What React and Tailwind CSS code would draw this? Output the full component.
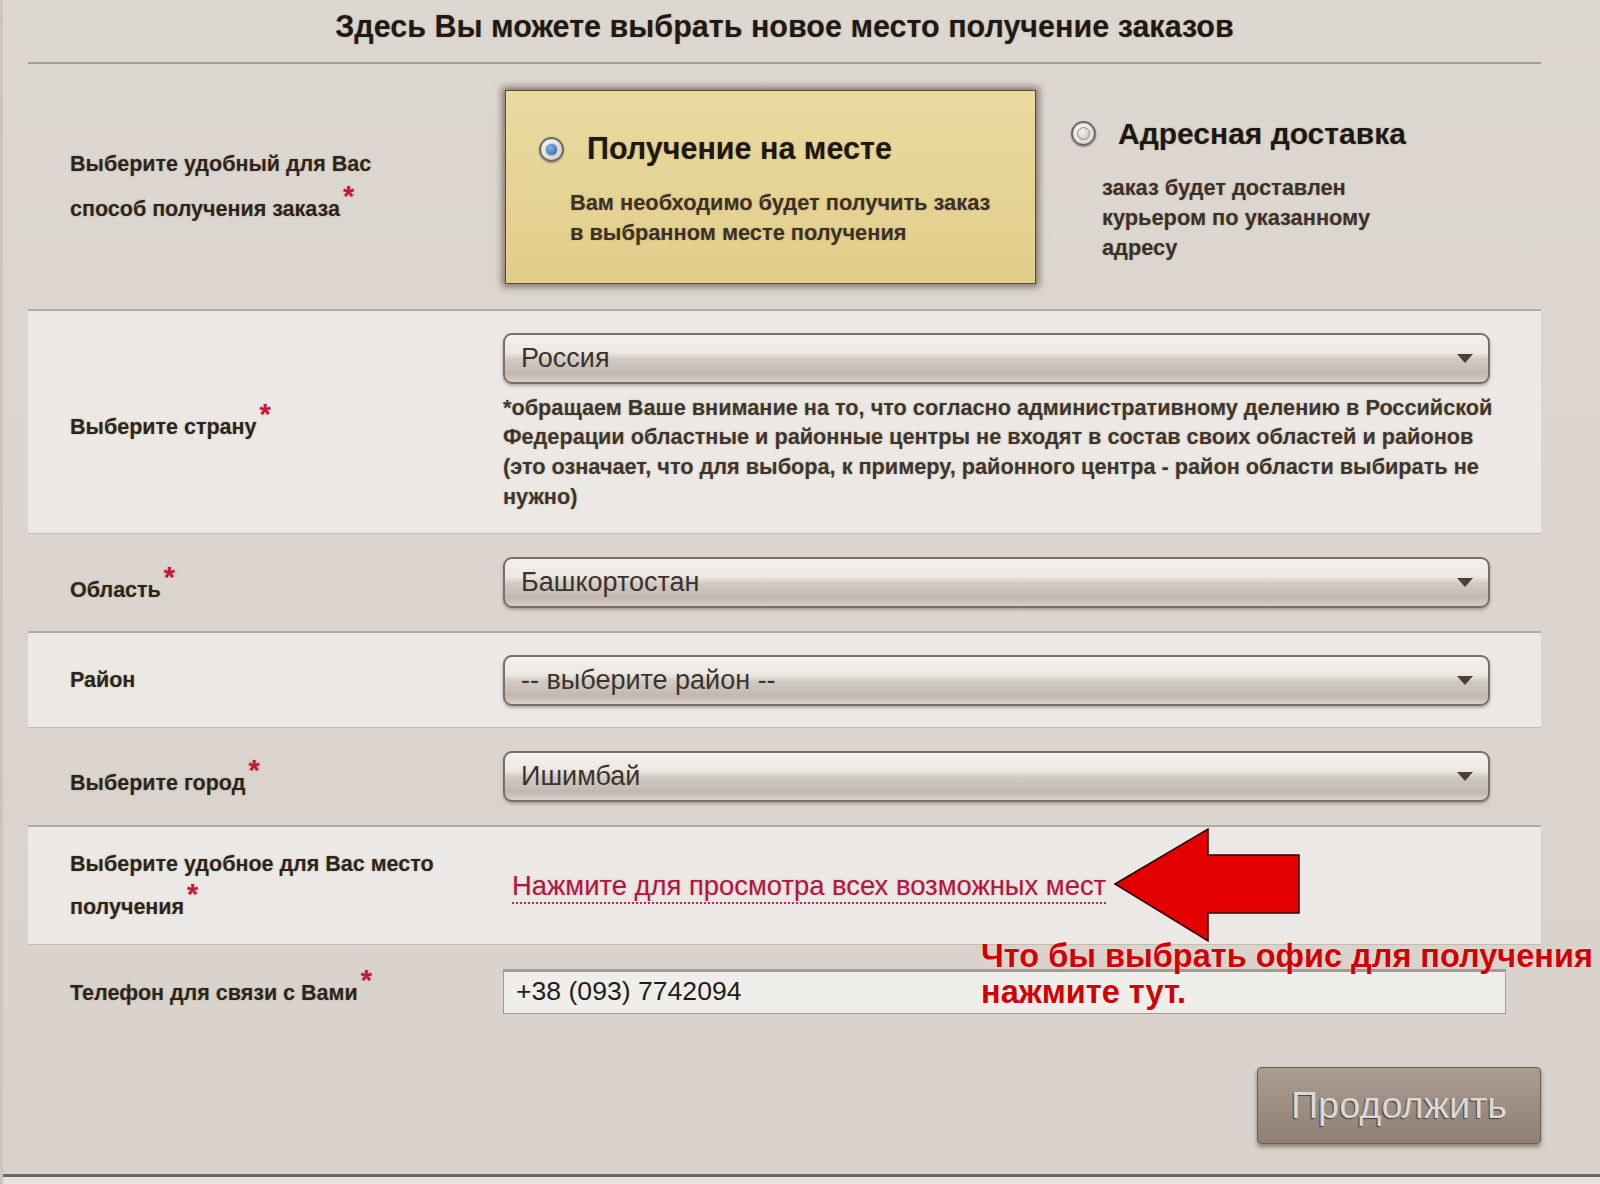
const labelShadow = "[text-shadow:0_0_2px_rgba(150,110,40,0.45)]";

function Star() {
  return (
    <span className="relative -top-[10px] ml-[3px] text-[29px] font-bold leading-none text-[#c8153e]">*</span>
  );
}

function Radio({ checked }) {
  return (
    <span className="flex h-[25px] w-[25px] shrink-0 items-center justify-center rounded-full border-2 border-[#6f6964] bg-[radial-gradient(circle_at_40%_35%,#ffffff,#c9c4c0)] shadow-[0_1px_2px_rgba(0,0,0,0.35)]">
      {checked ? (
        <span className="h-[11px] w-[11px] rounded-full bg-[radial-gradient(circle_at_35%_35%,#7fb6ee,#1f5fa8)] shadow-[0_0_2px_rgba(0,0,40,0.7)]" />
      ) : (
        <span className="h-[13px] w-[13px] rounded-full border border-[#8f8984] bg-[radial-gradient(circle_at_40%_35%,#f4f2f0,#c4beb9)]" />
      )}
    </span>
  );
}

function Select({ value }) {
  return (
    <div className="flex h-[51px] w-[987px] items-center justify-between rounded-[9px] border-2 border-[#7b6e66] bg-[linear-gradient(to_bottom,#f3f0ed_0%,#ebe7e3_38%,#d2c9c2_52%,#c2b8b0_82%,#d6cec8_100%)] pl-[16px] pr-[15px] shadow-[0_2px_3px_rgba(80,60,50,0.35)]">
      <span className="text-[27px] text-[#3b332e]">{value}</span>
      <svg width="16" height="9" viewBox="0 0 16 9">
        <polygon points="0,0 16,0 8,9" fill="#4b403a" />
      </svg>
    </div>
  );
}

function Row({ striped, height, label, required, shift = "", children }) {
  return (
    <div
      className={`flex items-center ${height} ${
        striped
          ? "border-t-2 border-b border-t-[#b4aba4] border-b-[#c4bbb4] bg-[#ebe8e5]"
          : ""
      }`}
    >
      <div className={`w-[475px] shrink-0 pl-[42px] text-[21.5px] font-bold leading-[43px] text-[#2b2521] ${shift} ${labelShadow}`}>
        {label}
        {required && <Star />}
      </div>
      <div>{children}</div>
    </div>
  );
}

export default function App() {
  return (
    <div className="relative h-[1184px] w-[1600px] overflow-hidden border-l-[3px] border-[#cdc6c0] bg-[linear-gradient(to_bottom,#ddd7d2,#d9d2cc)] font-['Liberation_Sans',Arial,sans-serif]">
      <div className="ml-[25px] w-[1513px]">
        {/* Title */}
        <div className="flex h-[64px] items-start justify-center border-b-2 border-[#a59c95] pt-[4px]">
          <h1 className={`text-[30.5px] font-bold text-[#1f1a17] ${labelShadow}`}>
            Здесь Вы можете выбрать новое место получение заказов
          </h1>
        </div>

        {/* Delivery type */}
        <div className="flex h-[245px]">
          <div className={`flex w-[475px] shrink-0 items-center pl-[42px] text-[21.5px] font-bold leading-[45px] text-[#2b2521] ${labelShadow}`}>
            <div>
              Выберите удобный для Вас
              <br />
              способ получения заказа
              <Star />
            </div>
          </div>

          <div className="mt-[26px] ml-[2px] h-[194px] w-[531px] shrink-0 border border-[#5a4a36] bg-[linear-gradient(to_bottom,#eadaa0,#e2ce8b)] pl-[33px] pt-[40px] shadow-[0_0_7px_3px_rgba(70,55,40,0.6)]">
            <div className="flex h-[36px] items-center gap-[23px]">
              <Radio checked />
              <span className={`text-[30.5px] font-bold text-[#1c1815] ${labelShadow}`}>Получение на месте</span>
            </div>
            <p className={`mt-[21px] pl-[31px] text-[21.8px] font-bold leading-[30px] text-[#3a312b] ${labelShadow}`}>
              Вам необходимо будет получить заказ
              <br />
              в выбранном месте получения
            </p>
          </div>

          <div className="ml-[35px] pt-[51px]">
            <div className="flex h-[36px] items-center gap-[22px]">
              <Radio />
              <span className={`text-[30px] font-bold text-[#1c1815] ${labelShadow}`}>Адресная доставка</span>
            </div>
            <p className={`mt-[22px] pl-[31px] text-[21.8px] font-bold leading-[30px] text-[#3a312b] ${labelShadow}`}>
              заказ будет доставлен
              <br />
              курьером по указанному
              <br />
              адресу
            </p>
          </div>
        </div>

        {/* Country */}
        <Row striped height="h-[225px]" label="Выберите страну" required shift="pt-[10px]">
          <Select value="Россия" />
          <p className={`mt-[9px] text-[21.7px] font-bold leading-[29.6px] text-[#3d3530] ${labelShadow}`}>
            *обращаем Ваше внимание на то, что согласно административному делению в Российской
            <br />
            Федерации областные и районные центры не входят в состав своих областей и районов
            <br />
            (это означает, что для выбора, к примеру, районного центра - район области выбирать не
            <br />
            нужно)
          </p>
        </Row>

        <Row height="h-[97px]" label="Область" required shift="pt-[15px]">
          <Select value="Башкортостан" />
        </Row>

        <Row striped height="h-[97px]" label="Район">
          <Select value="-- выберите район --" />
        </Row>

        <Row height="h-[97px]" label="Выберите город" required shift="pt-[14px]">
          <Select value="Ишимбай" />
        </Row>

        <Row
          striped
          height="h-[120px]"
          label={
            <>
              Выберите удобное для Вас место
              <br />
              получения
            </>
          }
          required
        >
          <a className="ml-[9px] border-b-2 border-dotted border-[#c0265a] pb-[1px] text-[27.4px] text-[#b0163f] [text-shadow:0_0_2px_rgba(160,60,60,0.3)]">
            Нажмите для просмотра всех возможных мест
          </a>
        </Row>

        <Row height="h-[97px]" label="Телефон для связи с Вами" required>
          <div className="-mt-[5px] flex h-[45px] w-[1003px] items-center border border-t-[3px] border-[#a39a93] bg-[#f0eeeb] pl-[12px] text-[26.6px] text-[#221d1a]">
            +38 (093) 7742094
          </div>
        </Row>

        {/* Submit */}
        <div className="mt-[25px] flex justify-end">
          <button className="h-[77px] w-[284px] rounded-[4px] border border-[#6c5d53] bg-[linear-gradient(to_bottom,#ab9d92,#8e7f74)] text-[37.8px] text-[#dcd8d4] shadow-[0_3px_4px_rgba(60,45,35,0.5)] [text-shadow:-1px_1px_1px_#4a3d35]">
            Продолжить
          </button>
        </div>
      </div>

      {/* bottom rule */}
      <div className="mt-[30px] h-[3px] bg-[#6f6660]" />
      <div className="h-[40px] bg-[#e6e2de]" />

      {/* annotation arrow */}
      <svg className="absolute left-[1106px] top-[824px]" width="196" height="122" viewBox="0 0 196 122">
        <polygon
          points="6,60 99,5 99,31 190,31 190,89 99,89 99,117"
          fill="#e20000"
          stroke="#2a0000"
          strokeWidth="1.5"
        />
      </svg>
      <div className="absolute left-[978px] top-[938px] text-[32.5px] font-bold leading-[36px] text-[#d30000] [text-shadow:0_0_2px_rgba(255,255,255,0.6)]">
        Что бы выбрать офис для получения
        <br />
        нажмите тут.
      </div>
    </div>
  );
}
